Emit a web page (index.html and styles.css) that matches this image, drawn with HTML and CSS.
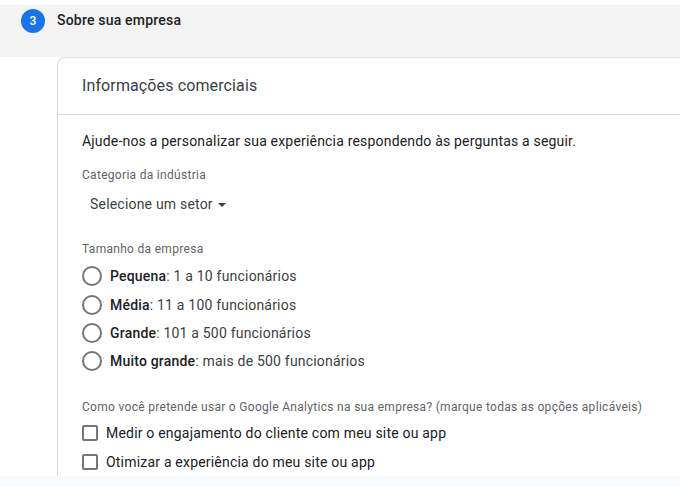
FILE: index.html
```html
<!DOCTYPE html>
<html lang="pt">
<head>
<meta charset="utf-8">
<title>Sobre sua empresa</title>
<link rel="stylesheet" href="styles.css">
</head>
<body>
<div class="page">
  <header class="step">
    <span class="step-num">3</span>
    <span class="step-title">Sobre sua empresa</span>
  </header>
  <main class="content">
    <section class="card">
      <h2 class="card-title">Informações comerciais</h2>
      <div class="card-body">
        <p class="intro">Ajude-nos a personalizar sua experiência respondendo às perguntas a seguir.</p>
        <div class="label label-cat">Categoria da indústria</div>
        <div class="select">Selecione um setor <span class="caret"></span></div>
        <div class="label label-size">Tamanho da empresa</div>
        <div class="radios">
          <div class="radio"><span class="circle"></span><span><b>Pequena</b>: 1 a 10 funcionários</span></div>
          <div class="radio"><span class="circle"></span><span><b>Média</b>: 11 a 100 funcionários</span></div>
          <div class="radio"><span class="circle"></span><span><b>Grande</b>: 101 a 500 funcionários</span></div>
          <div class="radio"><span class="circle"></span><span><b>Muito grande</b>: mais de 500 funcionários</span></div>
        </div>
        <div class="label label-use">Como você pretende usar o Google Analytics na sua empresa? (marque todas as opções aplicáveis)</div>
        <div class="checks">
          <div class="check"><span class="box"></span><span>Medir o engajamento do cliente com meu site ou app</span></div>
          <div class="check"><span class="box"></span><span>Otimizar a experiência do meu site ou app</span></div>
        </div>
      </div>
    </section>
  </main>
  <div class="footer-strip"></div>
</div>
</body>
</html>
```
FILE: styles.css
```css
* { box-sizing: border-box; }
html, body { margin: 0; padding: 0; height: 100%; background: #fff; overflow: hidden; }
body { font-family: Roboto, "Liberation Sans", sans-serif; color: #202124; }
.page { width: 680px; height: 487px; display: flex; flex-direction: column; padding-top: 5px; }
.step { height: 52px; flex: none; background: #f3f3f3; display: flex; align-items: flex-start; padding: 4px 0 0 21px; }
.step-num { width: 24px; height: 24px; border-radius: 50%; background: #1a73e8; color: #fff; font-size: 12px; font-weight: 500; display: flex; align-items: center; justify-content: center; flex: none; }
.step-title { margin: 1px 0 0 12px; font-size: 14px; font-weight: 500; line-height: 20px; letter-spacing: .2px; }
.content { flex: 1; min-height: 0; padding-left: 57px; overflow: hidden; }
.card { height: 100%; border: 1px solid #dadce0; border-right: 0; border-bottom: 0; border-top-left-radius: 8px; overflow: hidden; background: #fff; }
.card-title { margin: 0; height: 57px; padding: 0 0 0 24px; border-bottom: 1px solid #dadce0; font-size: 16px; font-weight: 400; line-height: 56px; color: #3c4043; letter-spacing: .12px; }
.card-body { padding: 0 0 0 24px; }
.intro { margin: 16px 0 0; font-size: 14px; line-height: 20px; color: #202124; letter-spacing: .19px; }
.label { font-size: 12px; line-height: 16px; color: #5f6368; letter-spacing: .3px; }
.label-cat { margin-top: 16px; }
.select { margin: 11px 0 0 8px; font-size: 14px; line-height: 20px; color: #3c4043; letter-spacing: .2px; display: flex; align-items: center; gap: 5px; }
.caret { width: 0; height: 0; border-left: 4px solid transparent; border-right: 4px solid transparent; border-top: 4px solid #3c4043; margin-top: 2px; }
.label-size { margin-top: 27px; }
.radios { margin-top: 5px; }
.radio { height: 28.4px; display: flex; align-items: center; gap: 8px; font-size: 14px; letter-spacing: .2px; color: #3c4043; }
.radio b { font-weight: 500; color: #202124; }
.circle { width: 20px; height: 20px; border: 2px solid #757575; border-radius: 50%; flex: none; }
.label-use { margin-top: 23px; }
.checks { margin-top: 4px; }
.check { height: 29px; display: flex; align-items: center; gap: 8px; font-size: 14px; letter-spacing: .2px; color: #202124; }
.box { width: 16px; height: 16px; border: 2px solid #757575; border-radius: 2px; flex: none; }
.footer-strip { flex: none; height: 11px; background: #f8f9fa; }
```
